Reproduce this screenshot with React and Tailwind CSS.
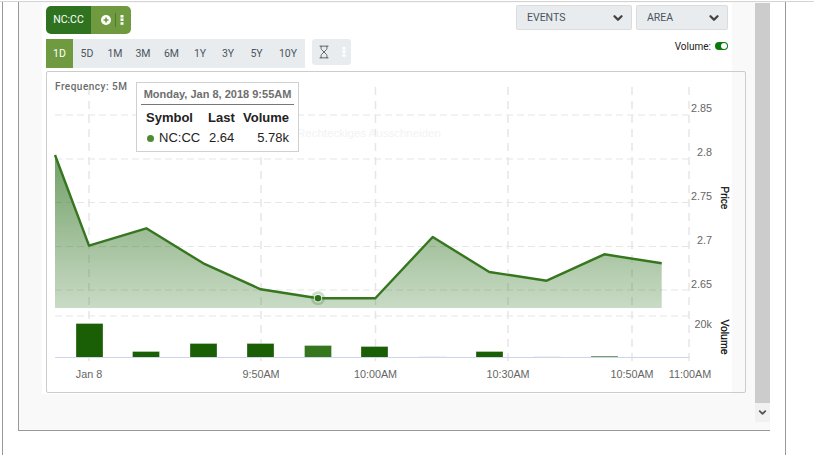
import React from 'react';
import { ChevronDown, Hourglass } from 'lucide-react';

const ranges = ['1D', '5D', '1M', '3M', '6M', '1Y', '3Y', '5Y', '10Y'];
const rangeWidths = ['w-[27px]', 'w-[28px]', 'w-[28px]', 'w-[28px]', 'w-[29px]', 'w-[28px]', 'w-[28px]', 'w-[29px]', 'w-[34px]'];

const linePoints = '55,155 89,245.7 146.3,228.3 203.3,263.3 260.7,289.3 318,298.3 375.3,298.3 432.7,237 489.3,272 546.7,280.7 604.3,254.3 661.7,263.3';
const gridY = [115, 159, 202.5, 246.5, 290, 316];
const gridX = [89, 261, 375.5, 508, 632, 689];
const priceLabels = [['2.85', 112], ['2.8', 156], ['2.75', 200], ['2.7', 244], ['2.65', 288], ['20k', 328]];
const timeLabels = [['Jan 8', 89], ['9:50AM', 261], ['10:00AM', 375.5], ['10:30AM', 508], ['10:50AM', 632], ['11:00AM', 690]];
const bars = [
  { x: 76, w: 27, top: 323.5, fill: '#1a5e05' },
  { x: 132.5, w: 27, top: 351.5, fill: '#1a5e05' },
  { x: 190, w: 27, top: 343.5, fill: '#1a5e05' },
  { x: 247, w: 27, top: 343.5, fill: '#1a5e05' },
  { x: 304.5, w: 27, top: 345.5, fill: '#35761f' },
  { x: 361, w: 27, top: 346.5, fill: '#1a5e05' },
  { x: 418.5, w: 28, top: 356.3, fill: '#e4ebdf' },
  { x: 476, w: 27, top: 351.5, fill: '#1a5e05' },
  { x: 533, w: 28, top: 356.3, fill: '#e4ebdf' },
  { x: 591, w: 27, top: 356, fill: '#5c8f4c' },
];

const Kebab = ({ className }) => (
  <svg width="4" height="10" viewBox="0 0 4 10" className={className}>
    <rect x="0.5" y="0" width="3" height="2.6" fill="currentColor" />
    <rect x="0.5" y="3.4" width="3" height="2.6" fill="currentColor" />
    <rect x="0.5" y="7.2" width="3" height="2.6" fill="currentColor" />
  </svg>
);

const Chart = () => (
  <svg width="698" height="320" viewBox="47 72 698 320" className="block">
    <defs>
      <linearGradient id="areaFill" x1="0" y1="155" x2="0" y2="308" gradientUnits="userSpaceOnUse">
        <stop offset="0" stopColor="#2f7320" stopOpacity="0.68" />
        <stop offset="1" stopColor="#2f7320" stopOpacity="0.26" />
      </linearGradient>
    </defs>

    {gridX.map((x) => (
      <line key={x} x1={x} y1="87" x2={x} y2="364" stroke="#e6e6e6" strokeWidth="1.5" strokeDasharray="8 6" />
    ))}
    {gridY.map((y) => (
      <line key={y} x1="55" y1={y} x2="689" y2={y} stroke="#e6e6e6" strokeWidth="1.2" strokeDasharray="7 4" />
    ))}

    <polygon points={`55,308 ${linePoints} 661.7,308`} fill="url(#areaFill)" />
    <polyline points={linePoints} fill="none" stroke="#35761f" strokeWidth="2.4" strokeLinejoin="round" />
    <circle cx="318" cy="298.3" r="7" fill="#35761f" opacity="0.25" />
    <circle cx="318" cy="298.3" r="4.2" fill="#ffffff" opacity="0.8" />
    <circle cx="318" cy="298.3" r="3.2" fill="#2a6e1c" />

    {bars.map((b) => (
      <rect key={b.x} x={b.x} y={b.top} width={b.w} height={357.3 - b.top} fill={b.fill} stroke="#ffffff" strokeOpacity="0.5" strokeWidth="0.6" />
    ))}
    <line x1="55" y1="357.5" x2="689" y2="357.5" stroke="#ccd6eb" strokeWidth="1" />

    <g fontFamily="'Liberation Sans', sans-serif" fontSize="10.8" fill="#666666">
      {priceLabels.map(([label, y]) => (
        <text key={label} x="712" y={y} textAnchor="end">{label}</text>
      ))}
      {timeLabels.map(([label, x]) => (
        <text key={label} x={x} y="377.5" textAnchor="middle">{label}</text>
      ))}
    </g>
    <g fontFamily="'Liberation Sans', sans-serif" fill="#000000" stroke="#000000" strokeWidth="0.2">
      <text transform="translate(721 198) rotate(90)" textAnchor="middle" fontSize="10">Price</text>
      <text transform="translate(721 337) rotate(90)" textAnchor="middle" fontSize="10.5">Volume</text>
    </g>
  </svg>
);

const Tooltip = () => (
  <div className="absolute left-[89px] top-[10px] w-[163px] h-[70px] border border-[#d0d0d0] bg-white/95 px-[4px] pt-[4px] font-['Liberation_Sans',sans-serif]">
    <div className="h-[18px] border-b border-[#777] text-center text-[11px] leading-[15px] font-bold text-[#6e6e6e] whitespace-nowrap">
      Monday, Jan 8, 2018 9:55AM
    </div>
    <div className="mt-[3px] flex h-[20px] items-center text-[13px] font-bold text-[#222] pl-[5px]">
      <span className="w-[62px]">Symbol</span>
      <span className="w-[33px]">Last</span>
      <span className="w-[48px] text-right">Volume</span>
    </div>
    <div className="flex h-[20px] items-center text-[13px] text-[#222] pl-[5px]">
      <span className="w-[62px] flex items-center whitespace-nowrap">
        <span className="ml-[1px] mr-[5px] h-[7px] w-[7px] rounded-full bg-[#4d8a36]" />
        NC:CC
      </span>
      <span className="w-[33px] pl-[1px]">2.64</span>
      <span className="w-[48px] text-right">5.78k</span>
    </div>
  </div>
);

const SelectBox = ({ label, className }) => (
  <div className={`flex h-[25px] items-center justify-between rounded-[2px] border border-[#dcdcdc] bg-[#e9ecef] pl-[10px] pr-[6px] text-[10.5px] text-[#4a5560] ${className}`}>
    <span>{label}</span>
    <ChevronDown size={14} strokeWidth={4} className="text-[#444]" />
  </div>
);

const App = () => {
  return (
    <div className="h-[455px] w-[814px] overflow-hidden bg-white pt-[1px] font-[Roboto,sans-serif]">
      <div className="h-[454px] border-t border-[#d4d4d4]">
        <div className="ml-[2px] h-[453px] w-[784px] border-x border-[#999]">
          <div className="ml-[15px] flex h-[429px] w-[752px] border-b border-l border-[#999]">
            <div className="w-[736px] bg-[#f9f9f9]">
              <div className="ml-[23px] mt-[1px] h-[391px] w-[690px] bg-white pl-[4px] pt-[2px]">
                {/* Symbol group and selects */}
                <div className="flex h-[34px] w-[682px] items-start justify-between">
                  <div className="mt-[1px] flex h-[28px] text-white">
                    <div className="flex w-[45px] items-center justify-center rounded-l-[5px] bg-[#2f7320] text-[10.5px]">NC:CC</div>
                    <div className="flex w-[40px] items-center rounded-r-[5px] bg-[#6f9a3f] pl-[10px]">
                      <svg width="10" height="10" viewBox="0 0 10 10">
                        <circle cx="5" cy="5" r="5" fill="#ffffff" />
                        <path d="M5 2.5v5M2.5 5h5" stroke="#6f9a3f" strokeWidth="1.6" />
                      </svg>
                      <span className="ml-[4px] h-[14px] w-px bg-[#4f7a28]" />
                      <Kebab className="ml-[4px]" />
                    </div>
                  </div>
                  <div className="flex gap-[4px]">
                    <SelectBox label="EVENTS" className="w-[116px]" />
                    <SelectBox label="AREA" className="w-[92px]" />
                  </div>
                </div>

                {/* Range buttons */}
                <div className="flex h-[32px] w-[682px] items-start">
                  <div className="flex h-[29px] bg-[#e9ecef] text-[10.5px] text-[#4a5560]">
                    {ranges.map((r, idx) => (
                      <div
                        key={r}
                        className={`flex items-center justify-center ${rangeWidths[idx]} ${idx === 0 ? 'bg-[#6f9a3f] text-white' : ''}`}
                      >
                        {r}
                      </div>
                    ))}
                  </div>
                  <div className="ml-[7px] flex h-[26px] w-[39px] items-center rounded-[3px] bg-[#e9ecef] pl-[5px]">
                    <Hourglass size={14} strokeWidth={1.5} className="text-[#555]" />
                    <Kebab className="ml-[11px] text-white" />
                  </div>
                  <div className="ml-auto mt-[2px] flex h-[10px] items-center gap-[4px] text-[10px] text-[#222]">
                    <span>Volume:</span>
                    <span className="relative h-[8px] w-[13px] rounded-full bg-[#0b7a0b]">
                      <span className="absolute right-[1px] top-[1px] h-[6px] w-[6px] rounded-full bg-white" />
                    </span>
                  </div>
                </div>

                {/* Chart */}
                <div className="relative h-[322px] w-[700px] rounded-[2px] border border-[#cccccc]">
                  <Chart />
                  <div className="absolute left-[8px] top-[7px] text-[10px] font-medium tracking-[0.5px] text-[#6b6b6b]">
                    Frequency: 5M
                  </div>
                  <div className="absolute left-[250px] top-[53px] font-['Liberation_Sans',sans-serif] text-[11.5px] text-[#f3f3f3] whitespace-nowrap">
                    Rechteckiges Ausschneiden
                  </div>
                  <Tooltip />
                </div>
              </div>
            </div>

            {/* Scrollbar */}
            <div className="flex w-[15px] flex-col bg-[#f9f9f9] pt-[1px]">
              <div className="h-[400px] bg-[#cccccc]" />
              <div className="flex h-[19px] items-center justify-center bg-[#f1f1f1]">
                <ChevronDown size={11} strokeWidth={4} className="text-[#555]" />
              </div>
            </div>
          </div>
        </div>
      </div>
    </div>
  );
};

export default App;
